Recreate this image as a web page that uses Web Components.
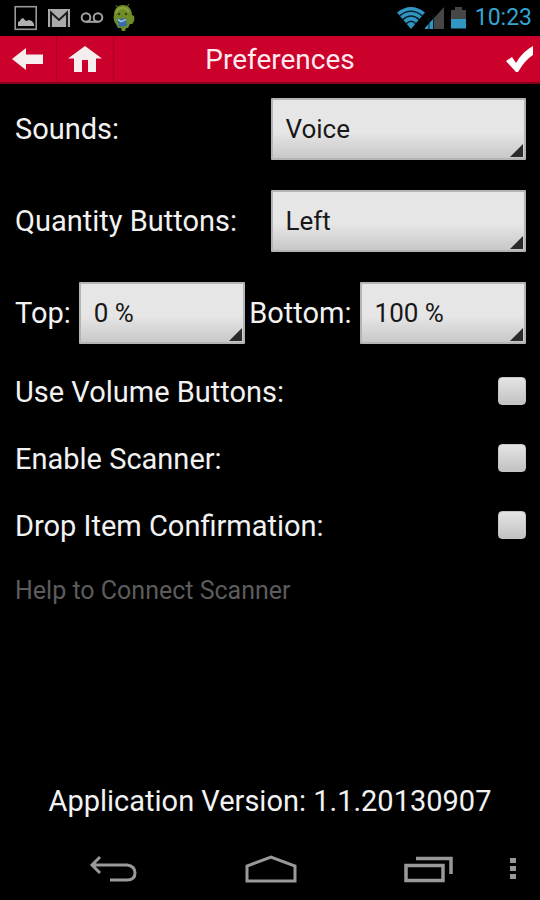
<!DOCTYPE html>
<html lang="en">
<head>
<meta charset="utf-8">
<meta name="viewport" content="width=device-width, initial-scale=1">
<title>Preferences</title>
<style>
html, body { margin: 0; background: #000; }
body { font-family: Roboto, "Liberation Sans", sans-serif; color: #f2f2f2; }
</style>
</head>
<body>
<phone-screen>
  <status-bar slot="top" time="10:23"></status-bar>
  <app-bar slot="top">Preferences</app-bar>
  <pref-select label="Sounds:" options="Voice,Tone,Off"></pref-select>
  <pref-select label="Quantity Buttons:" options="Left,Right"></pref-select>
  <pref-pair>
    <pref-select compact label="Top:" options="0 %,50 %,100 %"></pref-select>
    <pref-select compact label="Bottom:" options="100 %,50 %,0 %"></pref-select>
  </pref-pair>
  <div>
    <pref-check label="Use Volume Buttons:"></pref-check>
    <pref-check label="Enable Scanner:"></pref-check>
    <pref-check label="Drop Item Confirmation:"></pref-check>
    <help-link href="#help">Help to Connect Scanner</help-link>
  </div>
  <app-version slot="bottom">Application Version: 1.1.20130907</app-version>
  <nav-bar slot="bottom"></nav-bar>
</phone-screen>

<script>
const define = (name, render) => customElements.define(name, class extends HTMLElement {
  connectedCallback() {
    if (this.shadowRoot) return;
    this.attachShadow({ mode: 'open' }).innerHTML = render(this);
  }
});
const reset = `:host,*{box-sizing:border-box} button{appearance:none;border:0;padding:0;margin:0;background:none;color:inherit;font:inherit;cursor:pointer;display:flex;align-items:center;justify-content:center} svg{display:block}`;

define('phone-screen', () => `
<style>
:host{display:flex;flex-direction:column;min-height:100vh}
main{flex:1;display:flex;flex-direction:column;gap:30px;padding:14px 14px 0 15px}
main ::slotted(div){margin-top:-16px}
</style>
<slot name="top"></slot><main><slot></slot></main><slot name="bottom"></slot>`);

define('status-bar', el => `
<style>${reset}
:host{display:flex;align-items:center;justify-content:space-between;height:36px;padding:0 8px 0 14px}
div{display:flex;align-items:center}
.left{gap:9px}
time{font-size:23px;line-height:36px;color:#36a5d4;margin-left:6px}
</style>
<div class="left">
<svg width="24" height="26" viewBox="0 0 24 26"><rect x="1.2" y="1.7" width="21" height="22.6" fill="none" stroke="#999" stroke-width="1.6"/><path d="M4 21V17l2-1 1-2 2-1 3 3 3-1 3 1 2 3v2z" fill="#b0b0b0"/></svg>
<svg width="24" height="20" viewBox="0 0 24 20"><path d="M1 1H23V19H1z" fill="#aaa"/><path d="M4 19V4.500L12 12l8-7.500V19" fill="none" stroke="#1c1c1c" stroke-width="2"/></svg>
<svg width="24" height="14" viewBox="0 0 24 14" fill="none" stroke="#a3a3a3" stroke-width="2"><circle cx="6" cy="6.500" r="4.300"/><circle cx="18" cy="6.500" r="4.300"/><path d="M6 10.800H18"/></svg>
<svg width="22" height="30" viewBox="0 0 22 30"><path d="M5 5L3 2M14 4l2-3" stroke="#4d611d" stroke-width="1.200"/><path d="M1 12C1 6 5 2 10 2s9 4 9 10l2 1c1 2 0 7-2 8h-2l-2 4h-2l-1 3h-3l-1-3H5l-2-4c-2-2-3-6-2-9z" fill="#6f8c28"/><path d="M3 10c2-6 9-7 13-1" fill="none" stroke="#8ba53c" stroke-width="2"/><circle cx="6" cy="11" r="1.300" fill="#3a4a14"/><circle cx="13" cy="11" r="1.300" fill="#3a4a14"/><path d="M4 16l9-1 1 8-8 1z" fill="#3a6da5"/><path d="M5 16.500l3 2 5-2" fill="none" stroke="#bcd7ea" stroke-width="1.300"/></svg>
</div>
<div>
<svg width="28" height="24" viewBox="0 0 28 24"><path d="M0 6.500Q14-4.500 28 6.500L14 23z" fill="#3296c2"/><path d="M2.500 9.800Q14 .8 25.500 9.800M5.800 13.600Q14 6.500 22.200 13.600M9.300 17.600Q14 13 18.700 17.600" fill="none" stroke="#05202d" stroke-width="1.500"/></svg>
<svg width="20" height="24" viewBox="0 0 20 24"><path d="M19 1V23H-1z" fill="#464646"/><path d="M8 13V23H-1z" fill="#3296c2"/><path d="M4 12v11M8.500 8v15" stroke="#08202b" stroke-width="1"/></svg>
<svg width="24" height="24" viewBox="0 0 24 24"><path d="M10 1h7v3h4V22H6V4h4z" fill="#464646"/><path d="M6 13H21V22.500H6z" fill="#3296c2"/></svg>
<time>${el.getAttribute('time')}</time>
</div>`);

define('app-bar', () => `
<style>${reset}
:host{display:grid;grid-template-columns:114px 1fr 94px;grid-template-rows:100%;height:48px;background:#cb002b;border-bottom:2px solid #85001c;color:#fff}
.group{display:flex}
button{width:57px;border-right:1px solid #b00026}
h1{margin:0;font-size:28px;line-height:48px;font-weight:400;text-align:center;color:#ffe9ec}
.done{justify-self:end;width:40px;border:0}
</style>
<div class="group">
<button aria-label="Back"><svg width="32" height="22" viewBox="0 0 32 22"><path d="M0 11L14 0V6.500H31V16H14V22z" fill="#f6eeee"/></svg></button>
<button aria-label="Home"><svg width="34" height="27" viewBox="0 0 34 27"><path d="M17 0L0 12.500H6V26H14V14H20V26H28V12.500H34z" fill="#f6eeee"/></svg></button>
</div>
<h1><slot></slot></h1>
<button class="done" aria-label="Save"><svg width="28" height="28" viewBox="0 0 28 28"><path d="M0 16L6 12L10 18Q16 7 27 1V10Q19 15 12 27H10Z" fill="#fff"/></svg></button>`);

define('pref-select', el => `
<style>${reset}
:host{display:flex;align-items:center;justify-content:space-between;height:62px}
:host([compact]){flex:1 1 auto;gap:8px}
label{font-size:29px;line-height:32px;white-space:nowrap}
.box{position:relative;width:50%;height:62px}
:host([compact]) .box{flex:1 1 auto;width:140px}
select{appearance:none;display:block;width:100%;height:100%;margin:0;padding:0 24px 0 13px;border:2px solid #b4b4b4;border-radius:1px;background:linear-gradient(#e6e6e6,#e6e6e6 55%,#c8c8c8);color:#181818;font-family:inherit;font-size:26px}
svg{position:absolute;right:3px;bottom:3px;pointer-events:none}
</style>
<label for="s">${el.getAttribute('label')}</label>
<span class="box"><select id="s">${el.getAttribute('options').split(',').map(o => `<option>${o}</option>`).join('')}</select>
<svg width="13" height="13" viewBox="0 0 13 13"><path d="M13 0V13H0z" fill="#2b2b2b"/></svg></span>`);

define('pref-pair', () => `<style>:host{display:flex;gap:4px}</style><slot></slot>`);

define('pref-check', el => `
<style>${reset}
:host{display:block}
label{display:flex;align-items:center;justify-content:space-between;height:67px;font-size:29px;line-height:32px}
input{appearance:none;width:28px;height:28px;margin:0 0 2px;border:1px solid #c6c6c6;border-radius:4px;background:linear-gradient(#e4e4e4,#c2c2c2)}
input:checked{background:#36a5d4}
</style>
<label>${el.getAttribute('label')}<input type="checkbox"></label>`);

define('help-link', el => `
<style>:host{display:flex;align-items:center;height:64px}
a{color:#5c5c5c;text-decoration:none;font-size:25px;line-height:32px}</style>
<a href="${el.getAttribute('href')}"><slot></slot></a>`);

define('app-version', () => `
<style>:host{display:block;text-align:center;font-size:29px;line-height:32px;padding-bottom:20px}</style><slot></slot>`);

define('nav-bar', () => `
<style>${reset}
:host{display:flex;height:63px;padding:0 22px 0 34px}
button{flex:1}
.menu{flex:0 0 10px}
</style>
<button aria-label="Back"><svg width="48" height="28" viewBox="0 0 48 28" fill="none" stroke="#999" stroke-width="3"><path d="M3 10H38Q46 11 46 18T38 25H21M11 2L3 10L11 18"/></svg></button>
<button aria-label="Home"><svg width="52" height="28" viewBox="0 0 52 28" fill="none" stroke="#999" stroke-width="3"><path d="M2 26V11L26 2L50 11V26z"/></svg></button>
<button aria-label="Recent apps"><svg width="50" height="28" viewBox="0 0 50 28" fill="none" stroke="#999" stroke-width="3.500"><path d="M2 10.500H39V25.500H2zM12 3.500H47V19"/></svg></button>
<button class="menu" aria-label="Menu"><svg width="6" height="22" viewBox="0 0 6 22" fill="#999"><path d="M0 0H6V5H0zM0 8H6V13H0zM0 16H6V21H0z"/></svg></button>`);
</script>
</body>
</html>
